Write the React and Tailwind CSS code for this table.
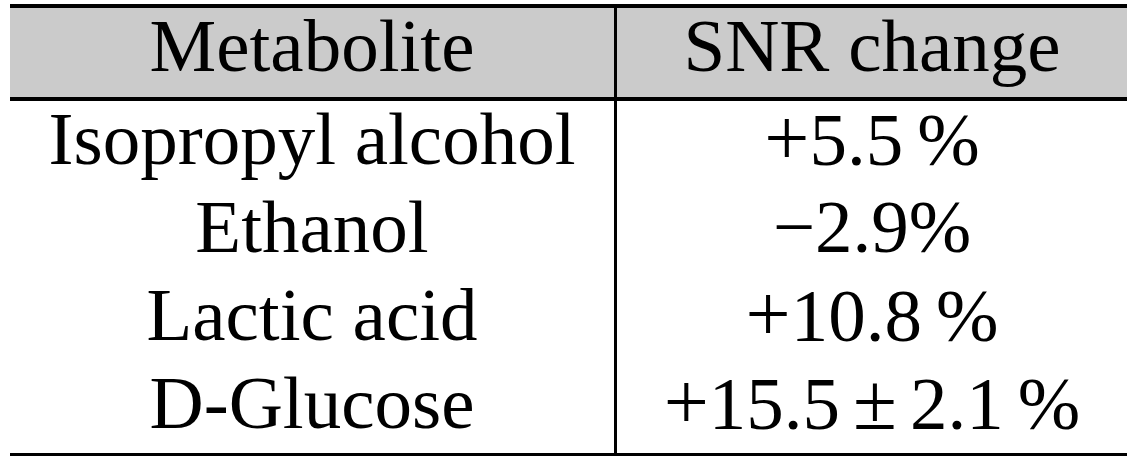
export default function App() {
  const Op = ({ children, cls = "" }) => (
    <span className={"text-[80px] " + cls}>{children}</span>
  );
  const rows = [
    ["Isopropyl alcohol", <><Op>+</Op>5.5<span className="ml-[14px]">%</span></>],
    ["Ethanol", <>−2.9%</>],
    ["Lactic acid", <><Op>+</Op>10.8<span className="ml-[14px]">%</span></>],
    [
      "D-Glucose",
      <>
        <Op>+</Op>15.5<Op cls="mx-[13px]">±</Op>2.1<span className="ml-[14px]">%</span>
      </>,
    ],
  ];
  return (
    <div
      className="w-[1137px] h-[466px] bg-white pt-1 pl-[10px] text-black text-[75px] leading-[75px]"
      style={{ fontFamily: '"Liberation Serif", "Times New Roman", serif' }}
    >
      <div className="w-[1117px]">
        <div className="flex bg-[#cbcbcb] border-t-4 border-b-4 border-black h-[97px]">
          <div className="w-[607px] border-r-[3px] border-black text-center">Metabolite</div>
          <div className="flex-1 text-center">SNR change</div>
        </div>
        <div className="border-b-[3px] border-black">
          {rows.map(([a, b], i) => (
            <div key={i} className="flex h-[88px]">
              <div className="w-[607px] border-r-[3px] border-black text-center">{a}</div>
              <div className="flex-1 text-center">{b}</div>
            </div>
          ))}
        </div>
      </div>
    </div>
  );
}
